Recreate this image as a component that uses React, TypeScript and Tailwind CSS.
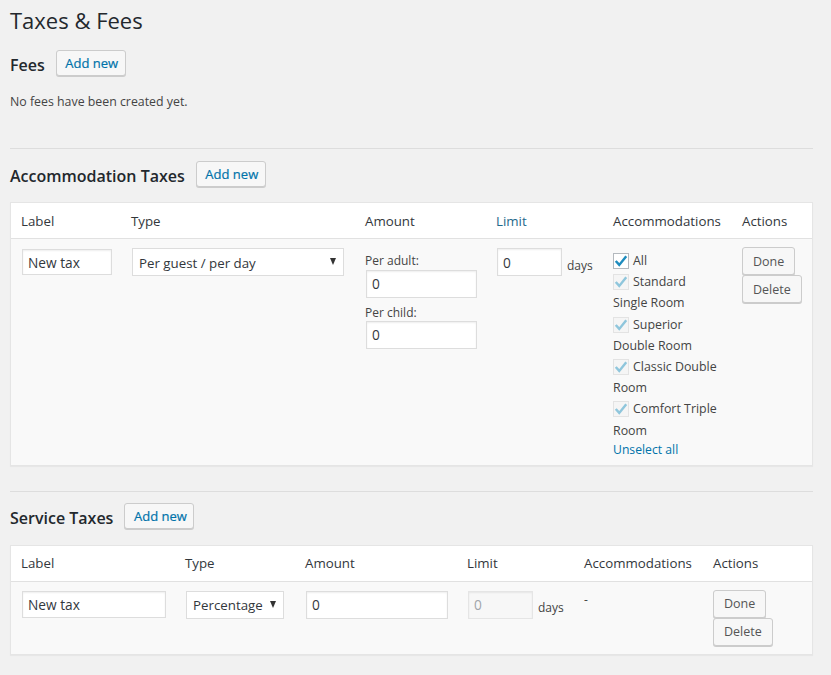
const CHECK_PATH = "M2 8 L6 12.5 L14 2.5";

function AddNewButton() {
  return (
    <button className="h-[26px] w-[70px] rounded-[3px] border border-[#cccccc] bg-[#f7f7f7] pl-[2px] text-[13px] leading-[24px] text-[#0073aa] shadow-[0_1px_0_#cccccc] [-webkit-text-stroke:0.2px_#0073aa]">
      Add new
    </button>
  );
}

function ActionButtons() {
  return (
    <div className="flex flex-col items-start">
      <button className="h-[28px] rounded-[3px] border border-[#cccccc] bg-[#f7f7f7] px-2.5 pt-[2px] text-[12.5px] text-[#555555] shadow-[0_1px_0_#cccccc]">
        Done
      </button>
      <button className="h-[28px] rounded-[3px] border border-[#cccccc] bg-[#f7f7f7] px-2.5 pt-[2px] text-[12.5px] text-[#555555] shadow-[0_1px_0_#cccccc]">
        Delete
      </button>
    </div>
  );
}

function Check({ disabled }: { disabled?: boolean }) {
  return (
    <span
      className={`mr-1 inline-block h-4 w-4 border align-[-4px] ${disabled ? "border-[#e3e3e3] bg-[#f5f5f5]" : "border-[#b4b9be] bg-white"}`}
    >
      <svg viewBox="0 0 16 16" className="h-[14px] w-[14px]">
        <path
          d={CHECK_PATH}
          fill="none"
          stroke={disabled ? "#8fc6dc" : "#1e8cbe"}
          strokeWidth="2.8"
        />
      </svg>
    </span>
  );
}

function TextField({
  value,
  className,
  disabled,
}: {
  value: string;
  className: string;
  disabled?: boolean;
}) {
  return (
    <input
      defaultValue={value}
      disabled={disabled}
      className={`block border px-[5px] text-[13.7px] outline-none shadow-[inset_0_1px_2px_rgba(0,0,0,0.07)] ${disabled ? "border-[#e5e5e5] bg-[#f7f7f7] text-[#a0a5aa]" : "border-[#dddddd] bg-white text-[#32373c]"} ${className}`}
    />
  );
}

function SelectField({ value, className }: { value: string; className: string }) {
  return (
    <div className={`relative ${className}`}>
      <select className="block h-full w-full appearance-none border border-[#dddddd] bg-white pt-[3px] pl-1.5 text-[13.3px] text-[#32373c] outline-none">
        <option>{value}</option>
      </select>
      <span className="absolute top-[10px] right-[8px] h-0 w-0 border-x-[3.5px] border-t-[7px] border-x-transparent border-t-[#333333]" />
    </div>
  );
}

function HeadCell({ children, blue }: { children: string; blue?: boolean }) {
  return (
    <th
      className={`h-[35px] px-2.5 pt-[2px] text-left align-middle text-[13.3px] font-normal ${blue ? "text-[#1f6a8c]" : "text-[#32373c]"}`}
    >
      {children}
    </th>
  );
}

function SectionTitle({ title }: { title: string }) {
  return (
    <div className="flex items-start gap-[11px]">
      <h2 className="mt-[2px] text-[16px] leading-[27px] font-semibold text-[#23282d]">{title}</h2>
      <AddNewButton />
    </div>
  );
}

export default function App() {
  const rooms = ["Standard Single Room", "Superior Double Room", "Classic Double Room", "Comfort Triple Room"];

  return (
    <div
      className="h-[675px] overflow-hidden bg-[#f1f1f1] pr-[18px] pl-2.5 text-[12px] text-[#444444]"
      style={{ fontFamily: '"Open Sans", sans-serif' }}
    >
      <h1 className="pt-[4px] text-[22px] leading-[32px] font-normal text-[#23282d]">Taxes &amp; Fees</h1>

      {/* fees */}
      <div className="mt-[14px]">
        <SectionTitle title="Fees" />
      </div>
      <p className="mt-[14px] text-[12.35px] leading-[18px]">No fees have been created yet.</p>
      <hr className="mt-[37px] border-t border-[#dddddd]" />

      {/* accommodation taxes */}
      <div className="mt-3">
        <SectionTitle title="Accommodation Taxes" />
      </div>
      <table className="mt-3 w-full table-fixed border-separate border-spacing-0 border border-[#e5e5e5] bg-white shadow-[0_1px_1px_rgba(0,0,0,0.04)]">
        <colgroup>
          <col className="w-[110px]" />
          <col className="w-[234px]" />
          <col className="w-[131px]" />
          <col className="w-[117px]" />
          <col className="w-[129px]" />
          <col />
        </colgroup>
        <thead>
          <tr>
            <HeadCell>Label</HeadCell>
            <HeadCell>Type</HeadCell>
            <HeadCell>Amount</HeadCell>
            <HeadCell blue>Limit</HeadCell>
            <HeadCell>Accommodations</HeadCell>
            <HeadCell>Actions</HeadCell>
          </tr>
        </thead>
        <tbody>
          <tr className="bg-[#f9f9f9] align-top">
            <td className="border-t border-[#e1e1e1] py-2.5 pr-2.5 pl-[11px]">
              <TextField value="New tax" className="h-[26px] w-[90px]" />
            </td>
            <td className="border-t border-[#e1e1e1] py-[9px] pr-2.5 pl-[11px]">
              <SelectField value="Per guest / per day" className="h-[28px] w-[212px]" />
            </td>
            <td className="border-t border-[#e1e1e1] px-2.5 pt-[13px] pb-2.5">
              <div className="leading-[18px]">Per adult:</div>
              <TextField value="0" className="ml-px h-[28px] w-[111px] pb-[2px]" />
              <div className="mt-[6px] leading-[18px]">Per child:</div>
              <TextField value="0" className="-mt-px ml-px h-[28px] w-[111px] pb-[2px]" />
            </td>
            <td className="border-t border-[#e1e1e1] py-[9px] pr-2.5 pl-[11px]">
              <div className="flex items-start gap-[5px]">
                <TextField value="0" className="h-[28px] w-[65px]" />
                <span className="mt-[9px] leading-[18px]">days</span>
              </div>
            </td>
            <td className="border-t border-[#e1e1e1] px-2.5 pt-[11px] pb-[7px]">
              <div className="text-[12.4px] leading-[21.2px]">
                <div>
                  <Check />
                  All
                </div>
                {rooms.map((room) => (
                  <div key={room}>
                    <Check disabled />
                    {room}
                  </div>
                ))}
              </div>
              <a className="block text-[12.2px] leading-[17px] text-[#0073aa]">Unselect all</a>
            </td>
            <td className="border-t border-[#e1e1e1] px-2.5 py-2">
              <ActionButtons />
            </td>
          </tr>
        </tbody>
      </table>
      <hr className="mt-[25px] border-t border-[#dddddd]" />

      {/* service taxes */}
      <div className="mt-[11px]">
        <SectionTitle title="Service Taxes" />
      </div>
      <table className="mt-[13px] w-full table-fixed border-separate border-spacing-0 border border-[#e5e5e5] bg-white shadow-[0_1px_1px_rgba(0,0,0,0.04)]">
        <colgroup>
          <col className="w-[164px]" />
          <col className="w-[120px]" />
          <col className="w-[162px]" />
          <col className="w-[117px]" />
          <col className="w-[129px]" />
          <col />
        </colgroup>
        <thead>
          <tr>
            <HeadCell>Label</HeadCell>
            <HeadCell>Type</HeadCell>
            <HeadCell>Amount</HeadCell>
            <HeadCell>Limit</HeadCell>
            <HeadCell>Accommodations</HeadCell>
            <HeadCell>Actions</HeadCell>
          </tr>
        </thead>
        <tbody>
          <tr className="bg-[#f9f9f9] align-top">
            <td className="border-t border-[#e1e1e1] py-[9px] pr-2.5 pl-[11px]">
              <TextField value="New tax" className="h-[27px] w-[144px]" />
            </td>
            <td className="border-t border-[#e1e1e1] py-[9px] pr-2.5 pl-[11px]">
              <SelectField value="Percentage" className="h-[28px] w-[98px]" />
            </td>
            <td className="border-t border-[#e1e1e1] py-[9px] pr-2.5 pl-[11px]">
              <TextField value="0" className="h-[28px] w-[142px]" />
            </td>
            <td className="border-t border-[#e1e1e1] py-[9px] pr-2.5 pl-[11px]">
              <div className="flex items-start gap-[5px]">
                <TextField value="0" className="h-[28px] w-[65px]" disabled />
                <span className="mt-2 leading-[18px]">days</span>
              </div>
            </td>
            <td className="border-t border-[#e1e1e1] px-2.5 pt-[9px] leading-[18px]">-</td>
            <td className="border-t border-[#e1e1e1] px-2.5 py-2">
              <ActionButtons />
            </td>
          </tr>
        </tbody>
      </table>
    </div>
  );
}
